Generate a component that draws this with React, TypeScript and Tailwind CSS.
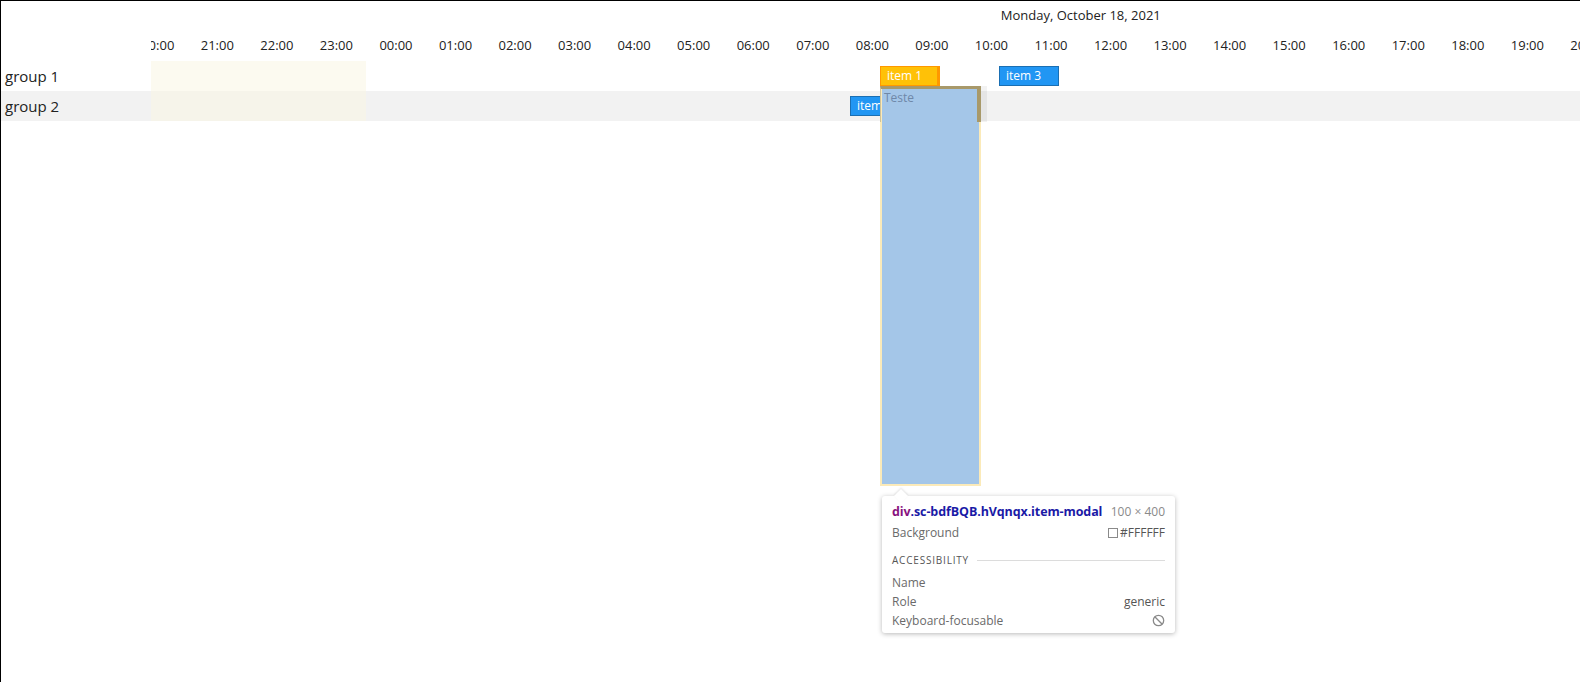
import React from "react";

const hours = [
  "20:00", "21:00", "22:00", "23:00", "00:00", "01:00", "02:00", "03:00", "04:00",
  "05:00", "06:00", "07:00", "08:00", "09:00", "10:00", "11:00", "12:00", "13:00",
  "14:00", "15:00", "16:00", "17:00", "18:00", "19:00", "20:00", "21:00",
];

const groups = [
  { id: 1, title: "group 1", odd: false },
  { id: 2, title: "group 2", odd: true },
];

// canvas-relative pixel positions (hour width 59.55px)
const items = [
  { id: 1, title: "item 1", left: 729, top: 5, selected: true },
  { id: 3, title: "item 3", left: 848, top: 5, selected: false },
  { id: 2, title: "item 2", left: 699, top: 35, selected: false },
];

function BlockIcon() {
  return (
    <svg width="13" height="13" viewBox="0 0 14 14" fill="none" stroke="#8a8a8a" strokeWidth="1.4">
      <circle cx="7" cy="7" r="5.6" />
      <path d="M3 3 L11 11" />
    </svg>
  );
}

function InspectTooltip() {
  return (
    <div className="absolute left-[881px] top-[495px] w-[293px] rounded-[3px] bg-white px-[10px] pt-[7px] pb-[3px] shadow-[0_1px_5px_rgba(0,0,0,0.28)] font-['Open_Sans',sans-serif] text-[12px]">
      <div className="absolute -top-[5px] left-[14px] h-[10px] w-[10px] rotate-45 bg-white shadow-[-1px_-1px_2px_rgba(0,0,0,0.1)]" />
      <div className="relative flex h-[18px] items-center justify-between">
        <span className="text-[12.5px] font-bold tracking-[-0.1px]">
          <span className="text-[#881280]">div</span>
          <span className="text-[#1a1aa6]">.sc-bdfBQB.hVqnqx.item-modal</span>
        </span>
        <span className="text-[#8a8a8a]">100 × 400</span>
      </div>
      <div className="mt-[3px] flex h-[18px] items-center justify-between text-[#6a6a6a]">
        <span>Background</span>
        <span className="flex items-center text-[#555]">
          <span className="mr-[2px] inline-block h-[10px] w-[10px] border border-[#8a8a8a] bg-white" />
          #FFFFFF
        </span>
      </div>
      <div className="mt-[9px] flex h-[18px] items-center gap-[8px]">
        <span className="text-[10px] tracking-[0.8px] text-[#555]">ACCESSIBILITY</span>
        <div className="h-px flex-1 bg-[#dcdcdc]" />
      </div>
      <div className="mt-[4px] flex h-[19px] items-center text-[#6a6a6a]">
        <span>Name</span>
      </div>
      <div className="flex h-[19px] items-center justify-between text-[#6a6a6a]">
        <span>Role</span>
        <span className="text-[#555]">generic</span>
      </div>
      <div className="flex h-[19px] items-center justify-between text-[#6a6a6a]">
        <span>Keyboard-focusable</span>
        <BlockIcon />
      </div>
    </div>
  );
}

export default function App() {
  return (
    <div className="relative h-screen w-full overflow-hidden border-l border-t border-black bg-white font-['Open_Sans',sans-serif] text-[#222]">
      {/* Header */}
      <div className="flex h-[60px]">
        <div className="w-[150px] shrink-0" />
        <div className="flex-1 overflow-hidden">
          <div className="-ml-[23px] flex h-[30px]">
            <div className="w-[238.2px] shrink-0" />
            <div className="flex w-[1429.2px] shrink-0 items-center justify-center text-[13px] text-[#222]">
              Monday, October 18, 2021
            </div>
          </div>
          <div className="-ml-[23px] flex h-[30px]">
            {hours.map((h, i) => (
              <div key={i} className="flex w-[59.55px] shrink-0 items-center justify-center text-[13px] text-[#222]">
                {h}
              </div>
            ))}
          </div>
        </div>
      </div>

      {/* Body */}
      <div className="flex">
        <div className="w-[150px] shrink-0">
          {groups.map((g) => (
            <div
              key={g.id}
              className={"flex h-[30px] items-center px-[4px] text-[15px] text-[#222] " + (g.odd ? "bg-[#f2f2f2]" : "bg-white")}
            >
              {g.title}
            </div>
          ))}
        </div>
        <div className="relative flex-1">
          {groups.map((g) => (
            <div key={g.id} className={"h-[30px] " + (g.odd ? "bg-[#f2f2f2]" : "bg-white")} />
          ))}
          {/* weekend column (Sunday) */}
          <div className="absolute left-0 top-0 h-[60px] w-[215px] bg-[rgba(250,246,225,0.5)]" />

          {items.map((it) => (
            <div
              key={it.id}
              className={
                "absolute h-[20px] w-[59.5px] overflow-hidden whitespace-nowrap pl-[6px] text-[12px] font-medium leading-[18px] text-white " +
                (it.selected
                  ? "border border-r-[3px] border-[#ff9800] bg-[#ffc107]"
                  : "border border-[#1a6fb3] bg-[#2196f3]")
              }
              style={{ left: it.left, top: it.top }}
            >
              {it.title}
            </div>
          ))}

          {/* item modal under devtools highlight */}
          <div className="absolute left-[729px] top-[25px] z-10 h-[400px] w-[101px] border-2 border-[#fbeab9] bg-[#a4c6e8]">
            <div className="absolute -left-[2px] -right-[2px] -top-[2px] h-[36px] border-l border-r-[4px] border-t-[3px] border-l-[#cfc39a] border-r-[#a8996a] border-t-[#a8996a]" />
            <div className="absolute -right-[8px] -top-[2px] h-[36px] w-[6px] bg-[rgba(0,0,0,0.05)]" />
            <div className="relative pl-[2px] pt-[1px] text-[12px] text-[#6f88a8]">Teste</div>
          </div>
        </div>
      </div>

      <InspectTooltip />
    </div>
  );
}
